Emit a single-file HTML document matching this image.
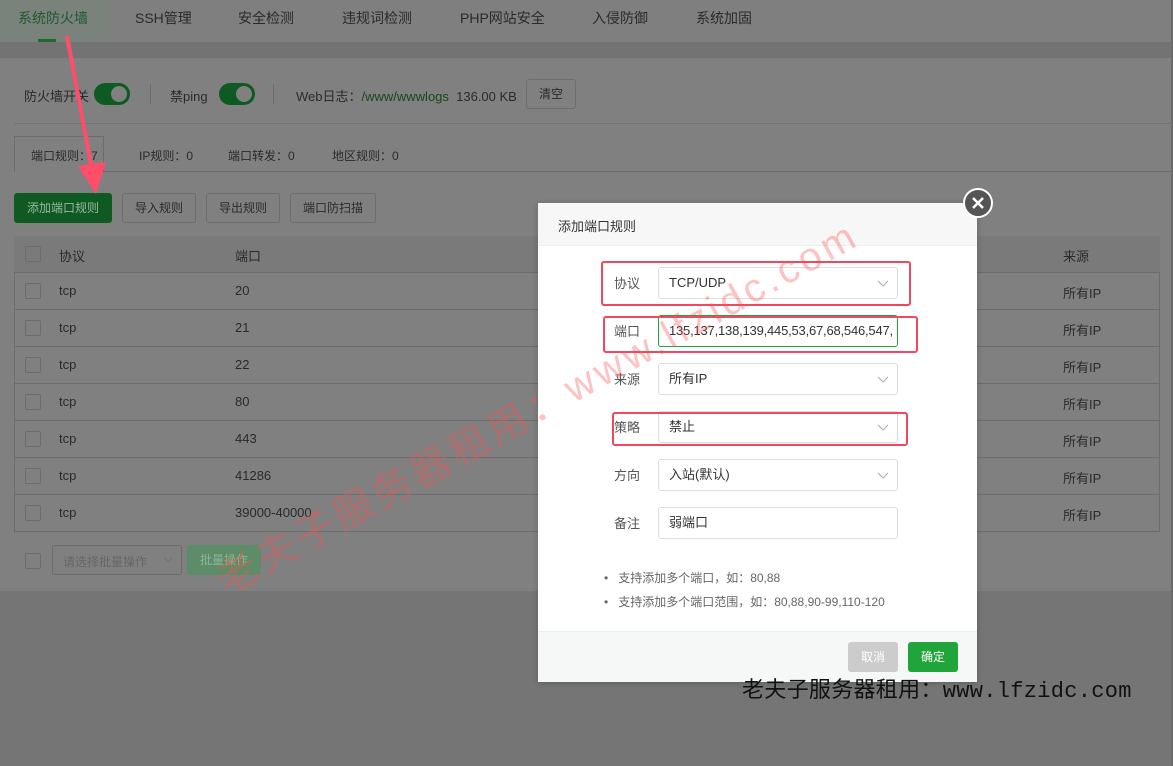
<!DOCTYPE html>
<html><head><meta charset="utf-8"><style>
*{margin:0;padding:0;box-sizing:border-box}
body{width:1173px;height:766px;position:relative;overflow:hidden;background:#757575;font-family:"Liberation Sans","Noto Sans CJK SC",sans-serif;font-size:13px;color:#333}
.a{position:absolute}
.g{color:#2a2a2a}
.sw{position:absolute;width:36px;height:22px;border-radius:11px;background:#0f5a23}
.sw:after{content:"";position:absolute;right:3px;top:3px;width:16px;height:16px;border-radius:50%;background:#808080}
.btn{position:absolute;height:30px;border:1px solid #6e6e6e;border-radius:3px;line-height:28px;text-align:center;color:#2a2a2a;font-size:12px}
.row{position:absolute;left:14px;width:1146px;height:37px;border-bottom:1px solid #6c6c6c;color:#2a2a2a}
.row span{position:absolute;top:10px}
.cb{position:absolute;left:11px;top:10px;width:16px;height:16px;border:1px solid #6c6c6c;border-radius:2px}
.lbl{position:absolute;left:76px;color:#555;font-size:13px}
.inp{position:absolute;left:120px;width:240px;height:32px;border:1px solid #ddd;border-radius:3px;padding-left:10px;line-height:30px;color:#333}
.chev{position:absolute;right:8px;top:9px;width:12px;height:12px}
.red{position:absolute;border:2px solid #f0485e;border-radius:3px}
</style></head><body>
<div class="a" style="left:0;top:0;width:1173px;height:42px;background:#7f7f7f"></div>
<div class="a" style="left:0;top:0;width:110px;height:42px;background:#7a827c"></div>
<div class="a" style="left:38px;top:39px;width:18px;height:3px;background:#1d6b2f"></div>
<div class="a" style="left:0;top:42px;width:1173px;height:16px;background:#737373"></div>
<div class="a" style="left:18px;top:8px;font-size:14px;color:#1d5a2b">系统防火墙</div>
<div class="a g" style="left:135px;top:8px;font-size:14px">SSH管理</div>
<div class="a g" style="left:238px;top:8px;font-size:14px">安全检测</div>
<div class="a g" style="left:342px;top:8px;font-size:14px">违规词检测</div>
<div class="a g" style="left:460px;top:8px;font-size:14px">PHP网站安全</div>
<div class="a g" style="left:592px;top:8px;font-size:14px">入侵防御</div>
<div class="a g" style="left:696px;top:8px;font-size:14px">系统加固</div>
<div class="a" style="left:0;top:58px;width:1173px;height:533px;background:#808080"></div>
<div class="a" style="left:1171px;top:0;width:2px;height:766px;background:#6a6a6a"></div>
<div class="a g" style="left:24px;top:86px">防火墙开关</div>
<div class="sw" style="left:94px;top:83px"></div>
<div class="a" style="left:150px;top:84px;width:1px;height:20px;background:#6c6c6c"></div>
<div class="a g" style="left:170px;top:86px">禁ping</div>
<div class="sw" style="left:219px;top:83px"></div>
<div class="a" style="left:273px;top:84px;width:1px;height:20px;background:#6c6c6c"></div>
<div class="a g" style="left:296px;top:86px">Web日志：<span style="color:#16471f">/www/wwwlogs</span>&nbsp;&nbsp;136.00 KB</div>
<div class="btn" style="left:526px;top:79px;width:50px">清空</div>
<div class="a" style="left:14px;top:123px;width:1159px;height:1px;background:#737373"></div>
<div class="a" style="left:14px;top:136px;width:90px;height:36px;border:1px solid #6c6c6c;border-bottom:none;background:#808080"></div>
<div class="a" style="left:104px;top:171px;width:1069px;height:1px;background:#6c6c6c"></div>
<div class="a g" style="left:31px;top:147px;font-size:12px">端口规则：7</div>
<div class="a g" style="left:139px;top:147px;font-size:12px">IP规则：0</div>
<div class="a g" style="left:228px;top:147px;font-size:12px">端口转发：0</div>
<div class="a g" style="left:332px;top:147px;font-size:12px">地区规则：0</div>
<div class="btn" style="left:14px;top:193px;width:98px;background:#0f5a23;border-color:#0f5a23;color:#9ab8a0">添加端口规则</div>
<div class="btn" style="left:122px;top:193px;width:74px">导入规则</div>
<div class="btn" style="left:206px;top:193px;width:74px">导出规则</div>
<div class="btn" style="left:290px;top:193px;width:86px">端口防扫描</div>
<div class="a" style="left:14px;top:236px;width:1146px;height:296px;border:1px solid #6c6c6c;border-top-color:#737373"></div>
<div class="row" style="top:236px;background:#7a7a7a"><div class="cb"></div><span style="left:45px">协议</span><span style="left:221px">端口</span><span style="left:1049px">来源</span></div>
<div class="row" style="top:273px"><div class="cb"></div><span style="left:45px">tcp</span><span style="left:221px">20</span><span style="left:1049px">所有IP</span></div>
<div class="row" style="top:310px"><div class="cb"></div><span style="left:45px">tcp</span><span style="left:221px">21</span><span style="left:1049px">所有IP</span></div>
<div class="row" style="top:347px"><div class="cb"></div><span style="left:45px">tcp</span><span style="left:221px">22</span><span style="left:1049px">所有IP</span></div>
<div class="row" style="top:384px"><div class="cb"></div><span style="left:45px">tcp</span><span style="left:221px">80</span><span style="left:1049px">所有IP</span></div>
<div class="row" style="top:421px"><div class="cb"></div><span style="left:45px">tcp</span><span style="left:221px">443</span><span style="left:1049px">所有IP</span></div>
<div class="row" style="top:458px"><div class="cb"></div><span style="left:45px">tcp</span><span style="left:221px">41286</span><span style="left:1049px">所有IP</span></div>
<div class="row" style="top:495px;border-bottom:none"><div class="cb"></div><span style="left:45px">tcp</span><span style="left:221px">39000-40000</span><span style="left:1049px">所有IP</span></div>
<div class="a" style="left:25px;top:553px;width:16px;height:16px;border:1px solid #6c6c6c;border-radius:2px"></div>
<div class="a" style="left:52px;top:545px;width:130px;height:30px;border:1px solid #6c6c6c;border-radius:3px;color:#666;font-size:12px;padding:7px 0 0 10px">请选择批量操作 <span style="position:absolute;right:8px;top:5px">⌵</span></div>
<div class="a" style="left:187px;top:545px;width:74px;height:30px;background:#5c8c68;border-radius:3px;color:#8fb49a;font-size:12px;text-align:center;line-height:30px">批量操作</div>
<div class="a" style="left:538px;top:203px;width:439px;height:479px;background:#fff;box-shadow:0 1px 6px rgba(0,0,0,.2)">
 <div class="a" style="left:0;top:0;width:439px;height:43px;background:#f7f7f7;border-bottom:1px solid #eee"></div>
 <div class="a" style="left:20px;top:13px;color:#333;font-size:13px">添加端口规则</div>
 <div class="lbl" style="top:70px">协议</div><div class="inp" style="top:64px">TCP/UDP<svg class="chev" viewBox="0 0 12 12"><path d="M1 4l5 5 5-5" fill="none" stroke="#aaa"/></svg></div>
 <div class="lbl" style="top:118px">端口</div><div class="inp" style="top:112px;border-color:#20a53a;letter-spacing:-0.2px">135,137,138,139,445,53,67,68,546,547,</div>
 <div class="lbl" style="top:166px">来源</div><div class="inp" style="top:160px">所有IP<svg class="chev" viewBox="0 0 12 12"><path d="M1 4l5 5 5-5" fill="none" stroke="#aaa"/></svg></div>
 <div class="lbl" style="top:214px">策略</div><div class="inp" style="top:208px">禁止<svg class="chev" viewBox="0 0 12 12"><path d="M1 4l5 5 5-5" fill="none" stroke="#aaa"/></svg></div>
 <div class="lbl" style="top:262px">方向</div><div class="inp" style="top:256px">入站(默认)<svg class="chev" viewBox="0 0 12 12"><path d="M1 4l5 5 5-5" fill="none" stroke="#aaa"/></svg></div>
 <div class="lbl" style="top:310px">备注</div><div class="inp" style="top:304px">弱端口</div>
 <div class="a" style="left:66px;top:366px;color:#666;font-size:12px">•&nbsp;&nbsp;&nbsp;支持添加多个端口，如：80,88</div>
 <div class="a" style="left:66px;top:390px;color:#666;font-size:12px">•&nbsp;&nbsp;&nbsp;支持添加多个端口范围，如：80,88,90-99,110-120</div>
 <div class="a" style="left:0;top:428px;width:439px;height:51px;background:#f6f7f7;border-top:1px solid #eee"></div>
 <div class="a" style="left:310px;top:439px;width:50px;height:30px;background:#ccc;border-radius:3px;color:#fff;font-size:12px;text-align:center;line-height:30px">取消</div>
 <div class="a" style="left:370px;top:439px;width:50px;height:30px;background:#20a53a;border-radius:3px;color:#fff;font-size:12px;text-align:center;line-height:30px">确定</div>
</div>
<div class="red" style="left:601px;top:261px;width:310px;height:45px"></div>
<div class="red" style="left:603px;top:316px;width:315px;height:37px"></div>
<div class="red" style="left:612px;top:412px;width:296px;height:34px"></div>
<div class="a" style="left:963px;top:188px;width:30px;height:30px;border-radius:50%;background:#555;border:2px solid #fff"><svg width="26" height="26" viewBox="0 0 26 26" style="position:absolute;left:0;top:0"><path d="M8 8l10 10M18 8L8 18" stroke="#fff" stroke-width="2.5"/></svg></div>
<svg class="a" style="left:0;top:0" width="200" height="200"><path d="M67 36L92 170" stroke="#ff4d6a" stroke-width="4"/><path d="M78 166L96 194 106 162Z" fill="#ff4d6a"/></svg>
<div class="a" style="transform:rotate(-29deg);transform-origin:0 0;font-size:40px;color:rgba(255,80,80,.35);white-space:nowrap;letter-spacing:4px;left:205px;top:555px">老夫子服务器租用：www.lfzidc.com</div>
<div class="a" style="left:742px;top:672px;font-size:22px;color:#111;white-space:nowrap;font-family:'Liberation Mono','Noto Sans CJK SC',monospace;letter-spacing:0.3px">老夫子服务器租用：www.lfzidc.com</div>
</body></html>
